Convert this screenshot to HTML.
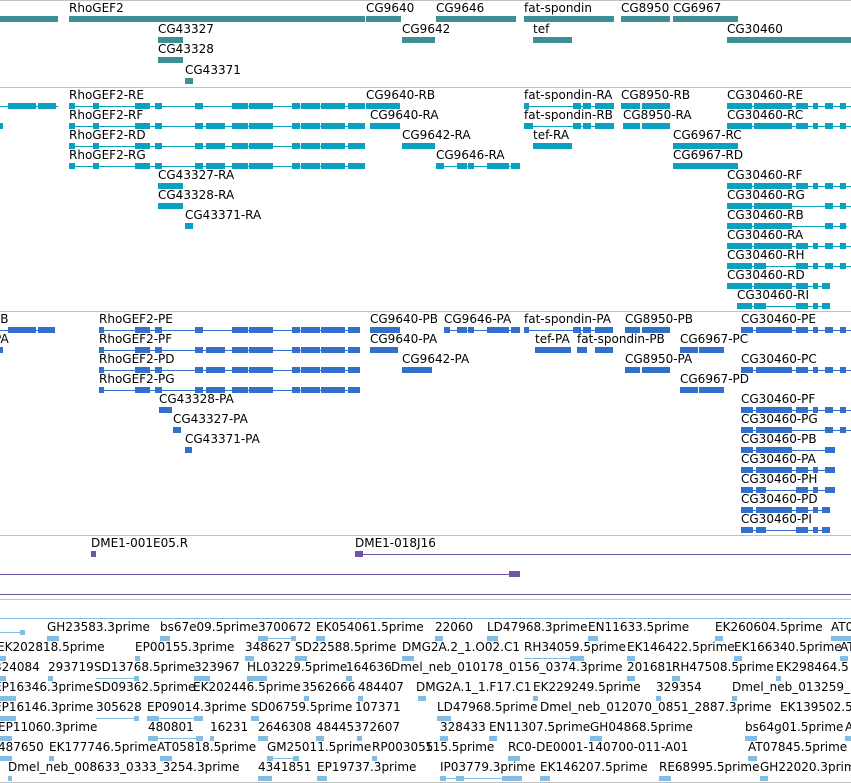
<!DOCTYPE html>
<html><head><meta charset="utf-8"><style>
*{margin:0;padding:0}
body{width:851px;height:783px;background:#fff;position:relative;overflow:hidden;font-family:"DejaVu Sans","Liberation Sans",sans-serif;font-size:12px;color:#000}
.h{position:absolute;left:0;width:851px;height:1px;background:#c0c0c0}
.r{position:absolute;left:0;width:851px;height:0}
.t{position:absolute;top:-18px;white-space:nowrap;line-height:14px;color:#000}
.b{position:absolute;top:-3px;height:6px}
.n{position:absolute;top:0;height:1px}
.A .b,.A .n{background:#3d8f96}
.B .b,.B .n{background:#0aa0c0}
.C .b,.C .n{background:#3370cc}
.E .b,.E .n{background:#84bde3}
.E .b{top:-2px;height:5px}
.P .b,.P .n{background:#7153a8}
</style></head><body>
<div class="h" style="top:0"></div>
<div class="h" style="top:87px"></div>
<div class="h" style="top:311px"></div>
<div class="h" style="top:535px"></div>
<div class="h" style="top:599px"></div>
<div class="h" style="top:782px"></div>
<div class="h" style="top:618px;background:#84bde3"></div>

<!-- Track 1 -->
<div class="r A" style="top:19px">
<i class="b" style="left:0;width:58px"></i>
<span class="t" style="left:69px">RhoGEF2</span><i class="b" style="left:69px;width:296px"></i>
<span class="t" style="left:366px">CG9640</span><i class="b" style="left:366px;width:35px"></i>
<span class="t" style="left:436px">CG9646</span><i class="b" style="left:436px;width:80px"></i>
<span class="t" style="left:524px">fat-spondin</span><i class="b" style="left:524px;width:90px"></i>
<span class="t" style="left:621px">CG8950</span><i class="b" style="left:621px;width:49px"></i>
<span class="t" style="left:673px">CG6967</span><i class="b" style="left:673px;width:65px"></i>
</div>
<div class="r A" style="top:40px">
<span class="t" style="left:158px">CG43327</span><i class="b" style="left:158px;width:25px"></i>
<span class="t" style="left:402px">CG9642</span><i class="b" style="left:402px;width:33px"></i>
<span class="t" style="left:533px">tef</span><i class="b" style="left:533px;width:39px"></i>
<span class="t" style="left:727px">CG30460</span><i class="b" style="left:727px;width:124px"></i>
</div>
<div class="r A" style="top:60px"><span class="t" style="left:158px">CG43328</span><i class="b" style="left:158px;width:25px"></i></div>
<div class="r A" style="top:81px"><span class="t" style="left:185px">CG43371</span><i class="b" style="left:185px;width:8px"></i></div>

<!-- Track 2 -->
<div class="r B" style="top:106px">
<i class="n" style="left:0;width:58px"></i><i class="b" style="left:8px;width:28px"></i><i class="b" style="left:38px;width:18px"></i>
<span class="t" style="left:69px">RhoGEF2-RE</span><i class="n" style="left:69px;width:296px"></i>
<i class="b" style="left:69px;width:6px"></i><i class="b" style="left:93px;width:6px"></i><i class="b" style="left:135px;width:15px"></i><i class="b" style="left:155px;width:7px"></i><i class="b" style="left:195px;width:8px"></i><i class="b" style="left:232px;width:16px"></i><i class="b" style="left:249px;width:24px"></i><i class="b" style="left:292px;width:8px"></i><i class="b" style="left:301px;width:19px"></i><i class="b" style="left:321px;width:24px"></i><i class="b" style="left:348px;width:17px"></i>
<span class="t" style="left:366px">CG9640-RB</span><i class="b" style="left:366px;width:34px"></i>
<span class="t" style="left:524px">fat-spondin-RA</span><i class="n" style="left:524px;width:90px"></i><i class="b" style="left:524px;width:5px"></i><i class="b" style="left:573px;width:8px"></i><i class="b" style="left:583px;width:8px"></i><i class="b" style="left:595px;width:19px"></i>
<span class="t" style="left:621px">CG8950-RB</span><i class="b" style="left:621px;width:19px"></i><i class="b" style="left:642px;width:28px"></i>
<span class="t" style="left:727px">CG30460-RE</span><i class="n" style="left:727px;width:124px"></i><i class="b" style="left:727px;width:25px"></i><i class="b" style="left:754px;width:38px"></i><i class="b" style="left:796px;width:12px"></i><i class="b" style="left:813px;width:5px"></i><i class="b" style="left:825px;width:8px"></i><i class="b" style="left:840px;width:6px"></i>
</div>
<div class="r B" style="top:126px">
<i class="b" style="left:0;width:3px"></i>
<span class="t" style="left:69px">RhoGEF2-RF</span><i class="n" style="left:69px;width:296px"></i>
<i class="b" style="left:69px;width:6px"></i><i class="b" style="left:93px;width:6px"></i><i class="b" style="left:135px;width:15px"></i><i class="b" style="left:155px;width:7px"></i><i class="b" style="left:195px;width:8px"></i><i class="b" style="left:206px;width:19px"></i><i class="b" style="left:232px;width:16px"></i><i class="b" style="left:249px;width:24px"></i><i class="b" style="left:292px;width:8px"></i><i class="b" style="left:301px;width:19px"></i><i class="b" style="left:321px;width:24px"></i><i class="b" style="left:348px;width:17px"></i>
<span class="t" style="left:370px">CG9640-RA</span><i class="b" style="left:370px;width:30px"></i>
<span class="t" style="left:524px">fat-spondin-RB</span><i class="n" style="left:524px;width:90px"></i><i class="b" style="left:524px;width:9px"></i><i class="b" style="left:573px;width:8px"></i><i class="b" style="left:583px;width:8px"></i><i class="b" style="left:595px;width:19px"></i>
<span class="t" style="left:623px">CG8950-RA</span><i class="b" style="left:623px;width:17px"></i><i class="b" style="left:642px;width:28px"></i>
<span class="t" style="left:727px">CG30460-RC</span><i class="n" style="left:727px;width:124px"></i><i class="b" style="left:727px;width:25px"></i><i class="b" style="left:754px;width:38px"></i><i class="b" style="left:796px;width:12px"></i><i class="b" style="left:813px;width:5px"></i><i class="b" style="left:825px;width:8px"></i><i class="b" style="left:840px;width:6px"></i>
</div>
<div class="r B" style="top:146px">
<span class="t" style="left:69px">RhoGEF2-RD</span><i class="n" style="left:69px;width:296px"></i>
<i class="b" style="left:69px;width:6px"></i><i class="b" style="left:93px;width:6px"></i><i class="b" style="left:135px;width:15px"></i><i class="b" style="left:155px;width:7px"></i><i class="b" style="left:195px;width:8px"></i><i class="b" style="left:206px;width:19px"></i><i class="b" style="left:232px;width:16px"></i><i class="b" style="left:249px;width:24px"></i><i class="b" style="left:292px;width:8px"></i><i class="b" style="left:301px;width:19px"></i><i class="b" style="left:321px;width:24px"></i><i class="b" style="left:348px;width:17px"></i>
<span class="t" style="left:402px">CG9642-RA</span><i class="b" style="left:402px;width:33px"></i>
<span class="t" style="left:533px">tef-RA</span><i class="b" style="left:533px;width:39px"></i>
<span class="t" style="left:673px">CG6967-RC</span><i class="b" style="left:673px;width:25px"></i><i class="b" style="left:698px;width:40px"></i>
</div>
<div class="r B" style="top:166px">
<span class="t" style="left:69px">RhoGEF2-RG</span><i class="n" style="left:69px;width:296px"></i>
<i class="b" style="left:69px;width:6px"></i><i class="b" style="left:93px;width:6px"></i><i class="b" style="left:135px;width:15px"></i><i class="b" style="left:155px;width:7px"></i><i class="b" style="left:195px;width:8px"></i><i class="b" style="left:206px;width:19px"></i><i class="b" style="left:232px;width:16px"></i><i class="b" style="left:249px;width:24px"></i><i class="b" style="left:292px;width:8px"></i><i class="b" style="left:301px;width:19px"></i><i class="b" style="left:321px;width:24px"></i><i class="b" style="left:348px;width:17px"></i>
<span class="t" style="left:436px">CG9646-RA</span><i class="n" style="left:436px;width:84px"></i><i class="b" style="left:436px;width:8px"></i><i class="b" style="left:457px;width:10px"></i><i class="b" style="left:468px;width:6px"></i><i class="b" style="left:487px;width:22px"></i><i class="b" style="left:511px;width:9px"></i>
<span class="t" style="left:673px">CG6967-RD</span><i class="b" style="left:673px;width:25px"></i><i class="b" style="left:698px;width:40px"></i>
</div>
<div class="r B" style="top:186px"><span class="t" style="left:158px">CG43327-RA</span><i class="b" style="left:158px;width:25px"></i>
<span class="t" style="left:727px">CG30460-RF</span><i class="n" style="left:727px;width:124px"></i><i class="b" style="left:727px;width:25px"></i><i class="b" style="left:754px;width:38px"></i><i class="b" style="left:796px;width:12px"></i><i class="b" style="left:813px;width:5px"></i><i class="b" style="left:825px;width:8px"></i><i class="b" style="left:840px;width:6px"></i></div>
<div class="r B" style="top:206px"><span class="t" style="left:158px">CG43328-RA</span><i class="b" style="left:158px;width:25px"></i>
<span class="t" style="left:727px">CG30460-RG</span><i class="n" style="left:727px;width:124px"></i><i class="b" style="left:727px;width:25px"></i><i class="b" style="left:754px;width:38px"></i><i class="b" style="left:825px;width:8px"></i><i class="b" style="left:840px;width:6px"></i></div>
<div class="r B" style="top:226px"><span class="t" style="left:185px">CG43371-RA</span><i class="b" style="left:185px;width:8px"></i>
<span class="t" style="left:727px">CG30460-RB</span><i class="n" style="left:727px;width:120px"></i><i class="b" style="left:727px;width:25px"></i><i class="b" style="left:754px;width:38px"></i><i class="b" style="left:825px;width:8px"></i><i class="b" style="left:840px;width:6px"></i></div>
<div class="r B" style="top:246px"><span class="t" style="left:727px">CG30460-RA</span><i class="n" style="left:727px;width:124px"></i><i class="b" style="left:727px;width:25px"></i><i class="b" style="left:754px;width:38px"></i><i class="b" style="left:796px;width:12px"></i><i class="b" style="left:813px;width:5px"></i><i class="b" style="left:825px;width:8px"></i><i class="b" style="left:840px;width:6px"></i></div>
<div class="r B" style="top:266px"><span class="t" style="left:727px">CG30460-RH</span><i class="n" style="left:727px;width:124px"></i><i class="b" style="left:727px;width:25px"></i><i class="b" style="left:754px;width:12px"></i><i class="b" style="left:796px;width:12px"></i><i class="b" style="left:813px;width:5px"></i><i class="b" style="left:825px;width:8px"></i><i class="b" style="left:840px;width:6px"></i></div>
<div class="r B" style="top:286px"><span class="t" style="left:727px">CG30460-RD</span><i class="n" style="left:727px;width:103px"></i><i class="b" style="left:727px;width:25px"></i><i class="b" style="left:754px;width:38px"></i><i class="b" style="left:796px;width:12px"></i><i class="b" style="left:813px;width:5px"></i><i class="b" style="left:822px;width:8px"></i></div>
<div class="r B" style="top:306px"><span class="t" style="left:737px">CG30460-RI</span><i class="n" style="left:737px;width:93px"></i><i class="b" style="left:737px;width:15px"></i><i class="b" style="left:754px;width:12px"></i><i class="b" style="left:796px;width:12px"></i><i class="b" style="left:813px;width:5px"></i><i class="b" style="left:822px;width:8px"></i></div>

<!-- Track 3 -->
<div class="r C" style="top:330px">
<span class="t" style="left:-7px">PB</span><i class="n" style="left:0;width:55px"></i><i class="b" style="left:8px;width:28px"></i><i class="b" style="left:38px;width:17px"></i>
<span class="t" style="left:99px">RhoGEF2-PE</span><i class="n" style="left:99px;width:261px"></i><i class="b" style="left:99px;width:5px"></i><i class="b" style="left:135px;width:15px"></i><i class="b" style="left:155px;width:7px"></i><i class="b" style="left:195px;width:8px"></i><i class="b" style="left:232px;width:16px"></i><i class="b" style="left:249px;width:24px"></i><i class="b" style="left:292px;width:8px"></i><i class="b" style="left:301px;width:19px"></i><i class="b" style="left:321px;width:24px"></i><i class="b" style="left:348px;width:12px"></i>
<span class="t" style="left:370px">CG9640-PB</span><i class="b" style="left:370px;width:30px"></i>
<span class="t" style="left:444px">CG9646-PA</span><i class="n" style="left:444px;width:76px"></i><i class="b" style="left:444px;width:6px"></i><i class="b" style="left:457px;width:10px"></i><i class="b" style="left:468px;width:6px"></i><i class="b" style="left:487px;width:22px"></i><i class="b" style="left:511px;width:9px"></i>
<span class="t" style="left:524px">fat-spondin-PA</span><i class="n" style="left:524px;width:89px"></i><i class="b" style="left:524px;width:5px"></i><i class="b" style="left:573px;width:8px"></i><i class="b" style="left:583px;width:8px"></i><i class="b" style="left:595px;width:18px"></i>
<span class="t" style="left:625px">CG8950-PB</span><i class="b" style="left:625px;width:15px"></i><i class="b" style="left:642px;width:28px"></i>
<span class="t" style="left:741px">CG30460-PE</span><i class="n" style="left:741px;width:110px"></i><i class="b" style="left:741px;width:12px"></i><i class="b" style="left:756px;width:36px"></i><i class="b" style="left:796px;width:12px"></i><i class="b" style="left:813px;width:5px"></i><i class="b" style="left:825px;width:8px"></i><i class="b" style="left:840px;width:6px"></i>
</div>
<div class="r C" style="top:350px">
<span class="t" style="left:-6px">PA</span><i class="b" style="left:0;width:3px"></i>
<span class="t" style="left:99px">RhoGEF2-PF</span><i class="n" style="left:99px;width:261px"></i><i class="b" style="left:99px;width:5px"></i><i class="b" style="left:135px;width:15px"></i><i class="b" style="left:155px;width:7px"></i><i class="b" style="left:195px;width:8px"></i><i class="b" style="left:206px;width:19px"></i><i class="b" style="left:232px;width:16px"></i><i class="b" style="left:249px;width:24px"></i><i class="b" style="left:292px;width:8px"></i><i class="b" style="left:301px;width:19px"></i><i class="b" style="left:321px;width:24px"></i><i class="b" style="left:348px;width:12px"></i>
<span class="t" style="left:370px">CG9640-PA</span><i class="b" style="left:370px;width:28px"></i>
<span class="t" style="left:535px">tef-PA</span><i class="b" style="left:535px;width:36px"></i>
<span class="t" style="left:577px">fat-spondin-PB</span><i class="b" style="left:577px;width:10px"></i><i class="b" style="left:595px;width:18px"></i>
<span class="t" style="left:680px">CG6967-PC</span><i class="b" style="left:680px;width:18px"></i><i class="b" style="left:699px;width:25px"></i>
</div>
<div class="r C" style="top:370px">
<span class="t" style="left:99px">RhoGEF2-PD</span><i class="n" style="left:99px;width:261px"></i><i class="b" style="left:99px;width:5px"></i><i class="b" style="left:135px;width:15px"></i><i class="b" style="left:155px;width:7px"></i><i class="b" style="left:195px;width:8px"></i><i class="b" style="left:206px;width:19px"></i><i class="b" style="left:232px;width:16px"></i><i class="b" style="left:249px;width:24px"></i><i class="b" style="left:292px;width:8px"></i><i class="b" style="left:301px;width:19px"></i><i class="b" style="left:321px;width:24px"></i><i class="b" style="left:348px;width:12px"></i>
<span class="t" style="left:402px">CG9642-PA</span><i class="b" style="left:402px;width:30px"></i>
<span class="t" style="left:625px">CG8950-PA</span><i class="b" style="left:625px;width:15px"></i><i class="b" style="left:642px;width:28px"></i>
<span class="t" style="left:741px">CG30460-PC</span><i class="n" style="left:741px;width:110px"></i><i class="b" style="left:741px;width:12px"></i><i class="b" style="left:756px;width:36px"></i><i class="b" style="left:796px;width:12px"></i><i class="b" style="left:813px;width:5px"></i><i class="b" style="left:825px;width:8px"></i><i class="b" style="left:840px;width:6px"></i>
</div>
<div class="r C" style="top:390px">
<span class="t" style="left:99px">RhoGEF2-PG</span><i class="n" style="left:99px;width:261px"></i><i class="b" style="left:99px;width:5px"></i><i class="b" style="left:135px;width:15px"></i><i class="b" style="left:155px;width:7px"></i><i class="b" style="left:195px;width:8px"></i><i class="b" style="left:206px;width:19px"></i><i class="b" style="left:232px;width:16px"></i><i class="b" style="left:249px;width:24px"></i><i class="b" style="left:292px;width:8px"></i><i class="b" style="left:301px;width:19px"></i><i class="b" style="left:321px;width:24px"></i><i class="b" style="left:348px;width:12px"></i>
<span class="t" style="left:680px">CG6967-PD</span><i class="b" style="left:680px;width:18px"></i><i class="b" style="left:699px;width:25px"></i>
</div>
<div class="r C" style="top:410px"><span class="t" style="left:159px">CG43328-PA</span><i class="b" style="left:159px;width:13px"></i>
<span class="t" style="left:741px">CG30460-PF</span><i class="n" style="left:741px;width:110px"></i><i class="b" style="left:741px;width:12px"></i><i class="b" style="left:756px;width:36px"></i><i class="b" style="left:796px;width:12px"></i><i class="b" style="left:813px;width:5px"></i><i class="b" style="left:825px;width:8px"></i><i class="b" style="left:840px;width:6px"></i></div>
<div class="r C" style="top:430px"><span class="t" style="left:173px">CG43327-PA</span><i class="b" style="left:173px;width:8px"></i>
<span class="t" style="left:741px">CG30460-PG</span><i class="n" style="left:741px;width:110px"></i><i class="b" style="left:741px;width:12px"></i><i class="b" style="left:756px;width:36px"></i><i class="b" style="left:825px;width:8px"></i><i class="b" style="left:840px;width:6px"></i></div>
<div class="r C" style="top:450px"><span class="t" style="left:185px">CG43371-PA</span><i class="b" style="left:185px;width:7px"></i>
<span class="t" style="left:741px">CG30460-PB</span><i class="n" style="left:741px;width:94px"></i><i class="b" style="left:741px;width:12px"></i><i class="b" style="left:756px;width:36px"></i><i class="b" style="left:825px;width:10px"></i></div>
<div class="r C" style="top:470px"><span class="t" style="left:741px">CG30460-PA</span><i class="n" style="left:741px;width:94px"></i><i class="b" style="left:741px;width:12px"></i><i class="b" style="left:756px;width:36px"></i><i class="b" style="left:796px;width:12px"></i><i class="b" style="left:813px;width:5px"></i><i class="b" style="left:825px;width:10px"></i></div>
<div class="r C" style="top:490px"><span class="t" style="left:741px">CG30460-PH</span><i class="n" style="left:741px;width:94px"></i><i class="b" style="left:741px;width:12px"></i><i class="b" style="left:756px;width:10px"></i><i class="b" style="left:796px;width:12px"></i><i class="b" style="left:813px;width:5px"></i><i class="b" style="left:825px;width:10px"></i></div>
<div class="r C" style="top:510px"><span class="t" style="left:741px">CG30460-PD</span><i class="n" style="left:741px;width:89px"></i><i class="b" style="left:741px;width:12px"></i><i class="b" style="left:756px;width:36px"></i><i class="b" style="left:796px;width:12px"></i><i class="b" style="left:813px;width:5px"></i><i class="b" style="left:822px;width:8px"></i></div>
<div class="r C" style="top:530px"><span class="t" style="left:741px">CG30460-PI</span><i class="n" style="left:741px;width:89px"></i><i class="b" style="left:741px;width:12px"></i><i class="b" style="left:756px;width:10px"></i><i class="b" style="left:796px;width:12px"></i><i class="b" style="left:813px;width:5px"></i><i class="b" style="left:822px;width:8px"></i></div>

<!-- Track 4 purple -->
<div class="r P" style="top:554px">
<span class="t" style="left:91px">DME1-001E05.R</span><i class="b" style="left:91px;width:5px"></i>
<span class="t" style="left:355px">DME1-018J16</span><i class="n" style="left:355px;width:496px"></i><i class="b" style="left:355px;width:8px"></i>
</div>
<div class="r P" style="top:574px"><i class="n" style="left:0;width:515px"></i><i class="b" style="left:509px;width:11px"></i></div>
<div class="r P" style="top:594px"><i class="n" style="left:0;width:851px"></i></div>

<!-- EST track -->
<div class="r E" style="top:638px">
<i class="n" style="left:0;width:22px;top:-6px"></i><i class="b" style="left:20px;width:5px;top:-8px"></i>
<span class="t" style="left:47px">GH23583.3prime</span><i class="b" style="left:47px;width:12px"></i>
<span class="t" style="left:160px">bs67e09.5prime</span><i class="b" style="left:160px;width:10px"></i>
<span class="t" style="left:258px">3700672</span><i class="n" style="left:258px;width:38px"></i><i class="b" style="left:258px;width:10px"></i><i class="b" style="left:291px;width:5px"></i>
<span class="t" style="left:316px">EK054061.5prime</span><i class="b" style="left:316px;width:9px"></i>
<span class="t" style="left:435px">22060</span><i class="b" style="left:435px;width:8px"></i>
<span class="t" style="left:487px">LD47968.3prime</span><i class="b" style="left:487px;width:11px"></i>
<span class="t" style="left:588px">EN11633.5prime</span><i class="b" style="left:588px;width:10px"></i>
<span class="t" style="left:715px">EK260604.5prime</span><i class="b" style="left:715px;width:8px"></i>
<span class="t" style="left:831px">AT0</span><i class="b" style="left:831px;width:20px"></i>
</div>
<div class="r E" style="top:658px">
<span class="t" style="left:-3px">EK202818.5prime</span><i class="b" style="left:0;width:6px"></i>
<span class="t" style="left:135px">EP00155.3prime</span><i class="b" style="left:135px;width:5px"></i>
<span class="t" style="left:245px">348627</span><i class="b" style="left:245px;width:9px"></i>
<span class="t" style="left:295px">SD22588.5prime</span><i class="b" style="left:295px;width:12px"></i>
<span class="t" style="left:402px">DMG2A.2_1.O02.C1</span><i class="b" style="left:402px;width:12px"></i>
<span class="t" style="left:524px">RH34059.5prime</span><i class="n" style="left:524px;width:60px"></i><i class="b" style="left:570px;width:14px"></i>
<span class="t" style="left:627px">EK146422.5prime</span><i class="b" style="left:627px;width:8px"></i>
<span class="t" style="left:734px">EK166340.5prime</span><i class="b" style="left:734px;width:8px"></i>
<span class="t" style="left:840px">AT</span><i class="b" style="left:840px;width:8px"></i>
</div>
<div class="r E" style="top:678px">
<span class="t" style="left:-6px">324084</span><i class="b" style="left:0;width:6px"></i>
<span class="t" style="left:48px">293719</span><i class="b" style="left:48px;width:5px"></i>
<span class="t" style="left:94px">SD13768.5prime</span><i class="n" style="left:96px;width:43px"></i><i class="b" style="left:134px;width:5px"></i>
<span class="t" style="left:194px">323967</span><i class="b" style="left:194px;width:16px"></i>
<span class="t" style="left:247px">HL03229.5prime</span><i class="b" style="left:247px;width:20px"></i>
<span class="t" style="left:346px">164636</span><i class="b" style="left:346px;width:6px"></i>
<span class="t" style="left:391px">Dmel_neb_010178_0156_0374.3prime</span>
<span class="t" style="left:627px">201681</span><i class="b" style="left:627px;width:8px"></i>
<span class="t" style="left:672px">RH47508.5prime</span><i class="b" style="left:672px;width:8px"></i>
<span class="t" style="left:776px">EK298464.5</span><i class="b" style="left:776px;width:5px"></i>
</div>
<div class="r E" style="top:698px">
<span class="t" style="left:-6px">EP16346.3prime</span><i class="b" style="left:0;width:16px"></i>
<span class="t" style="left:94px">SD09362.5prime</span>
<span class="t" style="left:193px">EK202446.5prime</span>
<span class="t" style="left:302px">3562666</span><i class="b" style="left:304px;width:5px"></i>
<span class="t" style="left:358px">484407</span><i class="b" style="left:358px;width:5px"></i>
<span class="t" style="left:416px">DMG2A.1_1.F17.C1</span><i class="b" style="left:418px;width:8px"></i>
<span class="t" style="left:533px">EK229249.5prime</span><i class="b" style="left:533px;width:5px"></i>
<span class="t" style="left:656px">329354</span><i class="b" style="left:656px;width:5px"></i>
<span class="t" style="left:732px">Dmel_neb_013259_</span><i class="b" style="left:732px;width:5px"></i>
</div>
<div class="r E" style="top:718px">
<span class="t" style="left:-6px">EP16146.3prime</span><i class="b" style="left:0;width:16px"></i>
<span class="t" style="left:96px">305628</span><i class="n" style="left:96px;width:43px"></i><i class="b" style="left:134px;width:5px"></i>
<span class="t" style="left:147px">EP09014.3prime</span><i class="n" style="left:147px;width:56px"></i><i class="b" style="left:147px;width:12px"></i><i class="b" style="left:194px;width:9px"></i>
<span class="t" style="left:251px">SD06759.5prime</span><i class="b" style="left:251px;width:8px"></i>
<span class="t" style="left:355px">107371</span>
<span class="t" style="left:437px">LD47968.5prime</span><i class="n" style="left:437px;width:14px"></i><i class="b" style="left:437px;width:14px"></i>
<span class="t" style="left:540px">Dmel_neb_012070_0851_2887.3prime</span>
<span class="t" style="left:780px">EK139502.5</span>
</div>
<div class="r E" style="top:738px">
<span class="t" style="left:-2px">EP11060.3prime</span><i class="b" style="left:0;width:12px"></i>
<span class="t" style="left:148px">480801</span><i class="n" style="left:148px;width:55px"></i><i class="b" style="left:148px;width:10px"></i><i class="b" style="left:196px;width:7px"></i>
<span class="t" style="left:210px">16231</span><i class="b" style="left:210px;width:4px"></i>
<span class="t" style="left:258px">2646308</span><i class="b" style="left:258px;width:10px"></i>
<span class="t" style="left:316px">48445372607</span><i class="b" style="left:316px;width:8px"></i><i class="b" style="left:357px;width:5px"></i>
<span class="t" style="left:440px">328433</span><i class="b" style="left:440px;width:8px"></i>
<span class="t" style="left:489px">EN11307.5prime</span><i class="b" style="left:489px;width:8px"></i>
<span class="t" style="left:590px">GH04868.5prime</span><i class="b" style="left:590px;width:12px"></i>
<span class="t" style="left:745px">bs64g01.5prime</span><i class="b" style="left:745px;width:12px"></i>
<span class="t" style="left:845px">A</span><i class="b" style="left:845px;width:6px"></i>
</div>
<div class="r E" style="top:758px">
<span class="t" style="left:-2px">487650</span><i class="b" style="left:0;width:12px"></i>
<span class="t" style="left:49px">EK177746.5prime</span><i class="b" style="left:49px;width:5px"></i>
<span class="t" style="left:157px">AT05818.5prime</span><i class="b" style="left:160px;width:12px"></i>
<span class="t" style="left:267px">GM25011.5prime</span><i class="n" style="left:267px;width:32px"></i><i class="b" style="left:267px;width:6px"></i><i class="b" style="left:293px;width:6px"></i>
<span class="t" style="left:372px">RP003055</span><i class="b" style="left:372px;width:5px"></i>
<span class="t" style="left:425px">115.5prime</span>
<span class="t" style="left:508px">RC0-DE0001-140700-011-A01</span><i class="b" style="left:508px;width:12px"></i>
<span class="t" style="left:748px">AT07845.5prime</span><i class="b" style="left:748px;width:9px"></i>
</div>
<div class="r E" style="top:778px">
<span class="t" style="left:8px">Dmel_neb_008633_0333_3254.3prime</span><i class="b" style="left:8px;width:4px"></i>
<span class="t" style="left:258px">4341851</span><i class="b" style="left:258px;width:14px"></i>
<span class="t" style="left:317px">EP19737.3prime</span><i class="b" style="left:317px;width:10px"></i>
<span class="t" style="left:440px">IP03779.3prime</span><i class="n" style="left:440px;width:82px"></i><i class="b" style="left:440px;width:6px"></i><i class="b" style="left:456px;width:8px"></i><i class="b" style="left:502px;width:20px"></i>
<span class="t" style="left:540px">EK146207.5prime</span><i class="b" style="left:540px;width:10px"></i>
<span class="t" style="left:659px">RE68995.5prime</span><i class="b" style="left:659px;width:12px"></i>
<span class="t" style="left:760px">GH22020.3prime</span><i class="b" style="left:760px;width:8px"></i>
</div>
</body></html>
